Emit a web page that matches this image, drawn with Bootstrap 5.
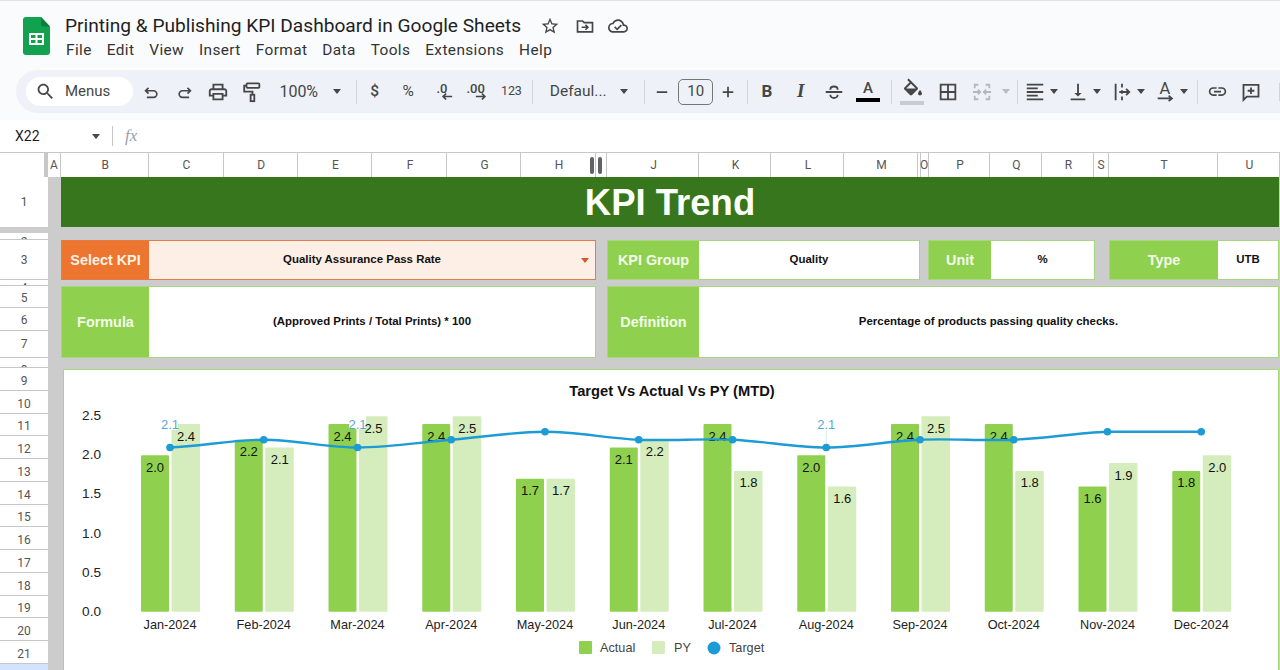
<!DOCTYPE html>
<html lang="en">
<head>
<meta charset="utf-8">
<title>Printing &amp; Publishing KPI Dashboard in Google Sheets</title>
<link href="https://cdn.jsdelivr.net/npm/bootstrap@5.3.0/dist/css/bootstrap.min.css" rel="stylesheet">
<style>
html,body{height:670px;overflow:hidden;background:#fff}
body{font-family:"Liberation Sans",Arial,sans-serif;color:#000}
.chrome{font-family:Roboto,"Noto Sans",sans-serif;color:#444746}
.top-band{height:120px;background:#f9fbfd;border-top:1px solid #dfe3dc}
.title-row{height:69px;padding-left:23px}
.sheet-logo{width:27px;height:38px;margin-top:16px;flex:none}
.title-block{margin-left:15px;padding-top:13px;width:640px}
.doc-title{font-size:19.15px;line-height:24px;color:#1f1f1f;white-space:nowrap}
.doc-title-icon{width:20px;height:20px;flex:none;fill:#444746}
.doc-ic1{margin-left:19px}.doc-ic2{margin-left:15px}.doc-ic3{margin-left:13px}
.menu-row{font-size:15.4px;letter-spacing:.4px;line-height:20px;margin-top:2px;margin-left:1px;color:#333;gap:14.9px;white-space:nowrap}
.tool-strip{height:43px;margin-left:16px;background:#eef2f8;border-radius:22px 0 0 22px;padding-left:10px;overflow:hidden}
.search-pill{width:107px;height:29px;background:#fff;border-radius:15px;padding-left:9px;margin-right:1px;flex:none;font-size:15px;color:#444746}
.search-pill svg{margin-right:9px}
.tb{width:33.7px;height:30px;flex:none;display:flex;align-items:center;justify-content:center;font-size:15.5px;color:#444746}
.tb svg{display:block}
.tb24{width:24px}.tb35{width:35px}.tb30{width:30px}.tb33{width:33px}
.tcar{width:16px;height:30px;flex:none;display:flex;align-items:center;justify-content:center}
.tcar14{width:14px}
.car{width:0;height:0;border-left:4.5px solid transparent;border-right:4.5px solid transparent;border-top:5px solid #444746}
.car-off{border-top-color:#b9bcc0}
.tdiv{width:1px;height:24px;background:#d3d6da;flex:none}
.zoom-txt{width:60px;font-size:16px;padding-left:0}
.font-txt{width:60px;font-size:15.5px;margin-left:15px;white-space:nowrap}
.size-box{width:35px;height:26px;border:1px solid #747775;border-radius:5px;flex:none;font-size:15px;color:#444746}
.ml1{margin-left:1px}.ml2{margin-left:2px}.ml3{margin-left:3px}.ml4{margin-left:4px}.ml5{margin-left:5px}.ml6{margin-left:6px}.ml7{margin-left:7px}.ml8{margin-left:8px}.ml10{margin-left:10px}.ml11{margin-left:11px}.ml12{margin-left:12px}.ml14{margin-left:14px}
.small-num{font-size:12.5px;letter-spacing:-.2px}
.dot-txt{font-size:13px;font-weight:500;line-height:1}
.tb-stack{display:flex;flex-direction:column;align-items:center;line-height:1}
.arrow-stack{margin-top:-3px;margin-left:11px}
.bold-b{font-weight:700;font-size:17px}
.ital-i{font-family:"Liberation Serif",serif;font-style:italic;font-weight:700;font-size:19px}
.letter-a{font-size:15px;line-height:14px;font-weight:500}
.color-bar{width:24px;height:4px;background:#000;margin-top:3px}
.fill-bar{width:24px;height:4px;background:#c9cccf;margin-top:-1px}
.formula-row{height:32px;background:#fff}
.name-box{width:112px;padding-left:15px;font-size:14px;color:#1f1f1f}
.name-box .car{margin-left:auto;margin-right:12px;border-top-color:#444746}
.fx-sep{width:1px;height:20px;background:#c7c7c7}
.fx-mark{font-family:"Liberation Serif",serif;font-style:italic;font-size:17px;color:#9aa0a6;margin-left:12px}
.col-head{height:25px;display:grid;grid-template-columns:45px 3px 13px 87.5px 75px 74.5px 74px 75px 74px 75px 11px 92px 72px 73px 74px 2px 9px 61px 52px 52px 15px 109px 62px;border-top:1px solid #c7c7c7;font-size:12px;color:#555;background:#fff}
.col-head>div{display:flex;align-items:center;justify-content:center;border-right:1px solid #c7c7c7;overflow:hidden;padding-left:2px}
.col-head>.col-bar{background:#c7c7c7;border:0;padding:0}
.col-head>.col-free{overflow:visible;position:relative;padding:0}
.col-head>.col-tight{padding:0;overflow:visible}
.freeze-a,.freeze-b{position:absolute;top:4px;width:4px;height:17px;border-radius:2px;background:#5f6368}
.freeze-a{left:-6px}.freeze-b{left:2px}
.sheet-body{height:493px;background:#ccc}
.row-heads{width:48px;flex:none;background:#fff;font-size:12px;color:#555;font-family:Roboto,sans-serif}
.rh{display:flex;align-items:center;justify-content:center;border-bottom:1px solid #c7c7c7;overflow:hidden;flex:none}
.rh1{height:56px;border-bottom:6px solid #ccc}
.rh2{height:7px;align-items:flex-start;padding-top:4px;line-height:10px}
.rh3{height:40px}
.rh4{height:6px;align-items:flex-start;padding-top:3px;line-height:10px}
.rh5{height:22px;padding-top:2px}.rh6{height:23px;padding-top:2px}.rh7{height:27px;padding-bottom:1px}
.rh8{height:10px;align-items:flex-start;padding-top:7px;line-height:10px}
.rh9{height:22.75px;padding-top:4px}
.rh-sel{height:10px;background:#d3e3fd;border:0}
.dash{flex:1;min-width:0;padding:0 1px 0 13px}
.dash-title{height:50px;background:#38761d;color:#fbfff7;font-size:36.5px;line-height:52px;font-weight:700;text-align:center}
.info-row{height:40px;margin-top:13px}
.def-row{height:72px;margin-top:6px}
.info-wrap{height:100%;border:1px solid #a8d67c;background:#fff;font-size:11.45px;font-weight:700;color:#111}
.info-label{background:#8fd14f;color:#f3fbe9;font-weight:700;font-size:14.4px;height:100%;flex:none;display:flex;align-items:center;justify-content:center;padding-top:2px}
.info-val{flex:1;display:flex;align-items:center;justify-content:center;height:100%;position:relative}
.pick-val{padding-right:20px}
.w-a{width:535px}.w-b{width:313px}.w-c{width:167px}.w-d{width:170px}.w-e{width:672px}
.gap-a{margin-left:11px}.gap-b{margin-left:8px}.gap-c{margin-left:14px}
.lab-88{width:87px}.lab-92{width:91px}.lab-63{width:62px}.lab-109{width:108px}
.kpi-wrap{border-color:#e87a45;background:#fdeee6}
.kpi-label{background:#ec7530;color:#fdf1e2}
.pick-caret{position:absolute;right:6px;top:17px;border-left:4.5px solid transparent;border-right:4.5px solid transparent;border-top:5px solid #d8552c}
.chart-box{margin:10.5px 0 0 2px;height:302px;border:1px solid #a8d67c;background:#fff;overflow:hidden}
.chart-svg{display:block}
.c-act{fill:#8fd14f}.c-py{fill:#d5ecbc}
.bar-lab{font-size:13px;fill:#111;text-anchor:middle}
.tgt-lab{font-size:13px;fill:#59a8d8;text-anchor:middle}
.x-lab{font-size:12.7px;fill:#222;text-anchor:middle}
.y-lab{font-size:13.6px;fill:#222;text-anchor:end}
.leg-lab{font-size:12.7px;fill:#444}
.chart-title{font-size:14.7px;font-weight:700;fill:#111;text-anchor:middle}
</style>
</head>
<body>
<header class="top-band chrome">
  <div class="title-row d-flex">
    <svg class="sheet-logo" viewBox="0 0 27 38"><path fill="#12a14f" d="M3 0h15l9 9.5V35a3 3 0 0 1-3 3H3a3 3 0 0 1-3-3V3a3 3 0 0 1 3-3z"/><path fill="#0b7f3c" d="M18 0l9 9.5h-6.500a2.500 2.500 0 0 1-2.500-2.500z"/><path fill="#fff" d="M6 16h15v12H6zM8 18v3h4.500v-3zm6.500 0v3H19v-3zM8 23v3h4.500v-3zm6.500 0v3H19v-3z" fill-rule="evenodd"/></svg>
    <div class="title-block">
      <div class="d-flex align-items-center">
        <div class="doc-title">Printing &amp; Publishing KPI Dashboard in Google Sheets</div>
        <svg class="doc-title-icon doc-ic1" viewBox="0 0 24 24"><path d="M22 9.240l-7.190-.62L12 2 9.190 8.630 2 9.240l5.460 4.730L5.820 21 12 17.270 18.180 21l-1.630-7.030L22 9.240zM12 15.400l-3.760 2.270 1-4.280-3.320-2.880 4.380-.38L12 6.100l1.710 4.040 4.380.38-3.320 2.880 1 4.280L12 15.400z"/></svg>
        <svg class="doc-title-icon doc-ic2" viewBox="0 0 24 24"><path fill="none" stroke="#444746" stroke-width="2" d="M3 6h6l2 2h10v11H3z"/><path fill="none" stroke="#444746" stroke-width="2" d="M8 13.500h7M12.500 10.500l3 3-3 3"/></svg>
        <svg class="doc-title-icon doc-ic3" viewBox="0 0 24 24"><path d="M19.350 10.040C18.670 6.590 15.640 4 12 4 9.110 4 6.600 5.640 5.350 8.040 2.340 8.360 0 10.910 0 14c0 3.310 2.690 6 6 6h13c2.760 0 5-2.240 5-5 0-2.640-2.050-4.780-4.650-4.960zM19 18H6c-2.210 0-4-1.790-4-4 0-2.050 1.530-3.760 3.560-3.970l1.070-.11.5-.95C8.080 7.140 9.940 6 12 6c2.620 0 4.880 1.860 5.390 4.430l.3 1.500 1.530.11c1.560.1 2.780 1.410 2.780 2.960 0 1.650-1.350 3-3 3z"/><path fill="none" stroke="#444746" stroke-width="2" d="M8 13l3 3 5-5"/></svg>
      </div>
      <nav class="menu-row d-flex"><span>File</span><span>Edit</span><span>View</span><span>Insert</span><span>Format</span><span>Data</span><span>Tools</span><span>Extensions</span><span>Help</span></nav>
    </div>
  </div>
  <div class="tool-strip d-flex align-items-center">
    <div class="search-pill d-flex align-items-center"><svg width="21" height="21" viewBox="0 0 24 24" fill="#444746"><path d="M15.500 14h-.79l-.28-.27C15.410 12.590 16 11.110 16 9.500 16 5.910 13.090 3 9.500 3S3 5.910 3 9.500 5.910 16 9.500 16c1.610 0 3.090-.59 4.230-1.570l.27.28v.79l5 4.990L20.490 19l-4.990-5zm-6 0C7.010 14 5 11.990 5 9.500S7.010 5 9.500 5 14 7.010 14 9.500 11.990 14 9.500 14z"/></svg>Menus</div>
    <div class="tb"><svg width="20" height="20" viewBox="0 0 24 24" fill="none" stroke="#444746" stroke-width="2"><path d="M9 7L5.500 10.500 9 14M5.500 10.500H15a4 4 0 0 1 0 8H7"/></svg></div>
    <div class="tb"><svg width="20" height="20" viewBox="0 0 24 24" fill="none" stroke="#444746" stroke-width="2"><path d="M15 7l3.500 3.500L15 14M18.500 10.500H9a4 4 0 0 0 0 8h8"/></svg></div>
    <div class="tb"><svg width="22" height="22" viewBox="0 0 24 24" fill="#444746"><path d="M19 8h-1V3H6v5H5c-1.660 0-3 1.340-3 3v6h4v4h12v-4h4v-6c0-1.660-1.340-3-3-3zM8 5h8v3H8V5zm8 12v2H8v-4h8v2zm2-2v-2H6v2H4v-4c0-.55.45-1 1-1h14c.55 0 1 .45 1 1v4h-2z"/></svg></div>
    <div class="tb"><svg width="22" height="22" viewBox="0 0 24 24" fill="none" stroke="#444746" stroke-width="2"><rect x="6" y="2.500" width="14" height="5" rx="1"/><path d="M6 5H3.500v6.500h9V15"/><rect x="10.500" y="15" width="4" height="7"/></svg></div>
    <div class="tb zoom-txt">100%</div>
    <div class="tcar"><span class="car"></span></div>
    <div class="tdiv ml11"></div>
    <div class="tb ml1 fw-medium">$</div>
    <div class="tb">%</div>
    <div class="tb"><div class="tb-stack"><span class="dot-txt">.0</span><svg class="arrow-stack" width="12" height="9" viewBox="0 0 14 9" fill="none" stroke="#444746" stroke-width="2"><path d="M13 4.500H3M6 1L2.500 4.500 6 8"/></svg></div></div>
    <div class="tb"><div class="tb-stack"><span class="dot-txt">.00</span><svg class="arrow-stack" width="12" height="9" viewBox="0 0 14 9" fill="none" stroke="#444746" stroke-width="2"><path d="M1 4.500h10M8 1l3.500 3.500L8 8"/></svg></div></div>
    <div class="tb small-num ml2">123</div>
    <div class="tdiv ml4"></div>
    <div class="tb font-txt">Defaul...</div>
    <div class="tcar ml8"><span class="car"></span></div>
    <div class="tdiv ml12"></div>
    <div class="tb tb33"><svg width="14" height="14" viewBox="0 0 16 16"><path fill="#444746" d="M2 7h12v2H2z"/></svg></div>
    <div class="size-box d-flex align-items-center justify-content-center">10</div>
    <div class="tb tb30"><svg width="14" height="14" viewBox="0 0 16 16"><path fill="#444746" d="M2 7h5V2h2v5h5v2H9v5H7V9H2z"/></svg></div>
    <div class="tdiv ml4"></div>
    <div class="tb bold-b ml2">B</div>
    <div class="tb ital-i">I</div>
    <div class="tb"><svg width="22" height="22" viewBox="0 0 24 24" fill="none" stroke="#444746" stroke-width="2"><path d="M3 12h18M8 9.500C8 7 10 6 12 6s4 1 4 3.500M8 15c0 2 2 3.500 4 3.500s4-1.500 4-3.500"/></svg></div>
    <div class="tb"><div class="tb-stack"><span class="letter-a">A</span><span class="color-bar"></span></div></div>
    <div class="tdiv ml6"></div>
    <div class="tb ml3"><div class="tb-stack"><svg width="22" height="19" viewBox="0 0 22 18" fill="#444746"><path d="M16.560 8.940L7.620 0 6.210 1.410l2.380 2.380-5.150 5.150c-.59.59-.59 1.540 0 2.120l5.500 5.500c.29.29.68.44 1.060.44s.77-.15 1.060-.44l5.500-5.500c.59-.58.59-1.530 0-2.120zM5.210 10L10 5.210 14.790 10H5.210zM19 11.500s-2 2.170-2 3.500c0 1.100.9 2 2 2s2-.9 2-2c0-1.330-2-3.500-2-3.500z"/></svg><span class="fill-bar mt-1"></span></div></div>
    <div class="tb tb35 ml2"><svg width="22" height="22" viewBox="0 0 24 24" fill="#444746"><path d="M3 3v18h18V3H3zm8 16H5v-6h6v6zm0-8H5V5h6v6zm8 8h-6v-6h6v6zm0-8h-6V5h6v6z"/></svg></div>
    <div class="tb"><svg width="20" height="22" viewBox="0 0 22 24" fill="none" stroke="#b4b8bc" stroke-width="2"><path d="M7 4H3v4M15 4h4v4M7 20H3v-4M15 20h4v-4M1 12h8M21 12h-8M6.500 9.500L9 12l-2.500 2.500M15.500 9.500L13 12l2.500 2.500"/></svg></div>
    <div class="tcar tcar14"><span class="car car-off"></span></div>
    <div class="tdiv ml4"></div>
    <div class="tb tb24 ml5"><svg width="22" height="22" viewBox="0 0 24 24" fill="#444746"><path d="M15 15H3v2h12v-2zm0-8H3v2h12V7zM3 13h18v-2H3v2zm0 8h18v-2H3v2zM3 3v2h18V3H3z"/></svg></div>
    <div class="tcar tcar14"><span class="car"></span></div>
    <div class="tb tb24 ml5"><svg width="22" height="22" viewBox="0 0 24 24" fill="#444746"><path d="M16 13h-3V3h-2v10H8l4 4 4-4zM4 19v2h16v-2H4z"/></svg></div>
    <div class="tcar tcar14"><span class="car"></span></div>
    <div class="tb tb24 ml6"><svg width="20" height="22" viewBox="0 0 22 24" fill="none" stroke="#444746" stroke-width="2"><path d="M4 3v18M11 3v4M11 10v4M11 17v4M8 12h11M15.500 8.500L19 12l-3.500 3.500"/></svg></div>
    <div class="tcar tcar14"><span class="car"></span></div>
    <div class="tb tb24 ml5"><svg width="22" height="24" viewBox="0 0 24 26"><text x="12" y="15" text-anchor="middle" font-family="Roboto,sans-serif" font-size="18" fill="#444746">A</text><path fill="none" stroke="#444746" stroke-width="2" d="M4 20h15M16 17l3.500 3-3.500 3"/></svg></div>
    <div class="tcar tcar14"><span class="car"></span></div>
    <div class="tdiv ml6"></div>
    <div class="tb tb24 ml7"><svg width="21" height="21" viewBox="0 0 24 24" fill="#444746"><path d="M3.900 12c0-1.710 1.390-3.100 3.100-3.100h4V7H7c-2.760 0-5 2.240-5 5s2.240 5 5 5h4v-1.900H7c-1.710 0-3.100-1.390-3.100-3.100zM8 13h8v-2H8v2zm9-6h-4v1.900h4c1.710 0 3.100 1.390 3.100 3.100s-1.390 3.100-3.100 3.100h-4V17h4c2.760 0 5-2.240 5-5s-2.240-5-5-5z"/></svg></div>
    <div class="tb tb24 ml10"><svg width="20" height="20" viewBox="0 0 24 24" fill="none" stroke="#444746" stroke-width="2.200"><path d="M3 3.500h18v14H7L3 21.500zM12 6.500v8M8 10.500h8"/></svg></div>
    <div class="tb tb24 ml14"><svg width="22" height="22" viewBox="0 0 24 24" fill="none" stroke="#444746" stroke-width="2"><rect x="3" y="3" width="18" height="18"/></svg></div>
  </div>
</header>
<section class="formula-row chrome d-flex align-items-center">
  <div class="name-box d-flex align-items-center">X22<span class="car"></span></div>
  <div class="fx-sep"></div>
  <div class="fx-mark">fx</div>
</section>
<section class="col-head chrome">
  <div></div><div class="col-bar"></div><div class="col-tight">A</div><div>B</div><div>C</div><div>D</div><div>E</div><div>F</div><div>G</div><div>H</div>
  <div class="col-free"><span class="freeze-a"></span><span class="freeze-b"></span></div>
  <div>J</div><div>K</div><div>L</div><div>M</div><div></div><div class="col-tight">O</div><div>P</div><div>Q</div><div>R</div><div class="col-tight">S</div><div>T</div><div>U</div>
</section>
<main class="sheet-body d-flex">
  <aside class="row-heads">
    <div class="rh rh1">1</div><div class="rh rh2">2</div><div class="rh rh3">3</div><div class="rh rh4">4</div><div class="rh rh5">5</div><div class="rh rh6">6</div><div class="rh rh7">7</div><div class="rh rh8">8</div>
    <div class="rh rh9">9</div><div class="rh rh9">10</div><div class="rh rh9">11</div><div class="rh rh9">12</div><div class="rh rh9">13</div><div class="rh rh9">14</div><div class="rh rh9">15</div><div class="rh rh9">16</div><div class="rh rh9">17</div><div class="rh rh9">18</div><div class="rh rh9">19</div><div class="rh rh9">20</div><div class="rh rh9">21</div>
    <div class="rh rh-sel"></div>
  </aside>
  <div class="dash">
    <div class="dash-title">KPI Trend</div>
    <div class="info-row d-flex">
      <div class="info-wrap kpi-wrap w-a d-flex"><div class="info-label kpi-label lab-88">Select KPI</div><div class="info-val pick-val">Quality Assurance Pass Rate<span class="pick-caret"></span></div></div>
      <div class="info-wrap w-b gap-a d-flex"><div class="info-label lab-92">KPI Group</div><div class="info-val">Quality</div></div>
      <div class="info-wrap w-c gap-b d-flex"><div class="info-label lab-63">Unit</div><div class="info-val">%</div></div>
      <div class="info-wrap w-d gap-c d-flex"><div class="info-label lab-109">Type</div><div class="info-val">UTB</div></div>
    </div>
    <div class="def-row d-flex">
      <div class="info-wrap w-a d-flex"><div class="info-label lab-88">Formula</div><div class="info-val">(Approved Prints / Total Prints) * 100</div></div>
      <div class="info-wrap w-e gap-a d-flex"><div class="info-label lab-92">Definition</div><div class="info-val">Percentage of products passing quality checks.</div></div>
    </div>
    <div class="card rounded-0 chart-box">
      <svg class="chart-svg" width="1215" height="300" viewBox="64 370 1215 300">
        <text class="chart-title" x="672" y="396">Target Vs Actual Vs PY (MTD)</text>
        <g class="y-lab"><text class="y-lab" x="101" y="420">2.5</text><text class="y-lab" x="101" y="459">2.0</text><text class="y-lab" x="101" y="498">1.5</text><text class="y-lab" x="101" y="538">1.0</text><text class="y-lab" x="101" y="577">0.5</text><text class="y-lab" x="101" y="616">0.0</text></g>
        <g class="c-act">
          <rect x="141" y="455.3" width="28" height="156.4" rx="1"/><rect x="234.750" y="439.7" width="28" height="172" rx="1"/><rect x="328.500" y="424" width="28" height="187.7" rx="1"/><rect x="422.250" y="424" width="28" height="187.7" rx="1"/><rect x="516" y="478.8" width="28" height="132.9" rx="1"/><rect x="609.750" y="447.5" width="28" height="164.2" rx="1"/><rect x="703.500" y="424" width="28" height="187.7" rx="1"/><rect x="797.250" y="455.3" width="28" height="156.4" rx="1"/><rect x="891" y="424" width="28" height="187.7" rx="1"/><rect x="984.750" y="424" width="28" height="187.7" rx="1"/><rect x="1078.500" y="486.6" width="28" height="125.1" rx="1"/><rect x="1172.250" y="470.9" width="28" height="140.8" rx="1"/>
        </g>
        <g class="c-py">
          <rect x="171.500" y="424" width="28.500" height="187.7" rx="1"/><rect x="265.250" y="447.5" width="28.500" height="164.2" rx="1"/><rect x="359" y="416.2" width="28.500" height="195.5" rx="1"/><rect x="452.750" y="416.2" width="28.500" height="195.5" rx="1"/><rect x="546.500" y="478.8" width="28.500" height="132.9" rx="1"/><rect x="640.250" y="439.7" width="28.500" height="172" rx="1"/><rect x="734" y="470.9" width="28.500" height="140.8" rx="1"/><rect x="827.750" y="486.6" width="28.500" height="125.1" rx="1"/><rect x="921.500" y="416.2" width="28.500" height="195.5" rx="1"/><rect x="1015.250" y="470.9" width="28.500" height="140.8" rx="1"/><rect x="1109" y="463.1" width="28.500" height="148.6" rx="1"/><rect x="1202.750" y="455.3" width="28.500" height="156.4" rx="1"/>
        </g>
        <path fill="#fff" d="M161 416h17v14h-17zM349 416h17v13h-17z"/>
        <path stroke="#d4e9f5" d="M826.250 430v15" fill="none"/>
        <g>
          <text class="bar-lab" x="155" y="472">2.0</text><text class="bar-lab" x="186" y="440.500">2.4</text>
          <text class="bar-lab" x="248.750" y="456">2.2</text><text class="bar-lab" x="279.750" y="464">2.1</text>
          <text class="bar-lab" x="342.500" y="440.500">2.4</text><text class="bar-lab" x="373.500" y="432.500">2.5</text>
          <text class="bar-lab" x="436.250" y="440.500">2.4</text><text class="bar-lab" x="467.250" y="432.500">2.5</text>
          <text class="bar-lab" x="530" y="495">1.7</text><text class="bar-lab" x="561" y="495">1.7</text>
          <text class="bar-lab" x="623.750" y="464">2.1</text><text class="bar-lab" x="654.750" y="456">2.2</text>
          <text class="bar-lab" x="717.500" y="440.500">2.4</text><text class="bar-lab" x="748.500" y="487">1.8</text>
          <text class="bar-lab" x="811.250" y="472">2.0</text><text class="bar-lab" x="842.250" y="503">1.6</text>
          <text class="bar-lab" x="905" y="440.500">2.4</text><text class="bar-lab" x="936" y="432.500">2.5</text>
          <text class="bar-lab" x="998.750" y="440.500">2.4</text><text class="bar-lab" x="1029.750" y="487">1.8</text>
          <text class="bar-lab" x="1092.500" y="503">1.6</text><text class="bar-lab" x="1123.500" y="479.500">1.9</text>
          <text class="bar-lab" x="1186.250" y="487">1.8</text><text class="bar-lab" x="1217.250" y="472">2.0</text>
        </g>
        <path fill="none" stroke="#1c9bd4" stroke-width="2.400" d="M170 447.500C201.250 446.200 232.500 439.700 263.750 439.700C295 439.700 326.250 447.500 357.500 447.500C388.750 447.500 420 442.300 451.250 439.700C482.500 437.100 513.750 431.800 545 431.800C576.250 431.800 607.500 438.400 638.750 439.700C670 441 701.250 438.400 732.500 439.700C763.750 441 795 447.500 826.250 447.500C857.500 447.500 888.750 441 920 439.700C951.250 438.400 982.500 441 1013.750 439.700C1045 438.400 1076.250 433.100 1107.500 431.800C1138.750 431.800 1170 431.800 1201.250 431.800"/>
        <g fill="#1c9bd4"><circle cx="170" cy="447.500" r="3.800"/><circle cx="263.750" cy="439.700" r="3.800"/><circle cx="357.500" cy="447.500" r="3.800"/><circle cx="451.250" cy="439.700" r="3.800"/><circle cx="545" cy="431.800" r="3.800"/><circle cx="638.750" cy="439.700" r="3.800"/><circle cx="732.500" cy="439.700" r="3.800"/><circle cx="826.250" cy="447.500" r="3.800"/><circle cx="920" cy="439.700" r="3.800"/><circle cx="1013.750" cy="439.700" r="3.800"/><circle cx="1107.500" cy="431.800" r="3.800"/><circle cx="1201.250" cy="431.800" r="3.800"/></g>
        <text class="tgt-lab" x="170" y="428.500">2.1</text><text class="tgt-lab" x="357.500" y="428.500">2.1</text><text class="tgt-lab" x="826.250" y="428.500">2.1</text>
        <g>
          <text class="x-lab" x="170" y="629">Jan-2024</text><text class="x-lab" x="263.750" y="629">Feb-2024</text><text class="x-lab" x="357.500" y="629">Mar-2024</text><text class="x-lab" x="451.250" y="629">Apr-2024</text><text class="x-lab" x="545" y="629">May-2024</text><text class="x-lab" x="638.750" y="629">Jun-2024</text><text class="x-lab" x="732.500" y="629">Jul-2024</text><text class="x-lab" x="826.250" y="629">Aug-2024</text><text class="x-lab" x="920" y="629">Sep-2024</text><text class="x-lab" x="1013.750" y="629">Oct-2024</text><text class="x-lab" x="1107.500" y="629">Nov-2024</text><text class="x-lab" x="1201.250" y="629">Dec-2024</text>
        </g>
        <rect class="c-act" x="579" y="641" width="13" height="13" rx="1"/><text class="leg-lab" x="600" y="652">Actual</text>
        <rect class="c-py" x="652" y="641" width="13" height="13" rx="1"/><text class="leg-lab" x="674" y="652">PY</text>
        <circle cx="714" cy="648" r="6.500" fill="#1c9bd4"/><text class="leg-lab" x="729" y="652">Target</text>
      </svg>
    </div>
  </div>
</main>
<script src="https://cdn.jsdelivr.net/npm/bootstrap@5.3.0/dist/js/bootstrap.bundle.min.js"></script>
</body>
</html>
